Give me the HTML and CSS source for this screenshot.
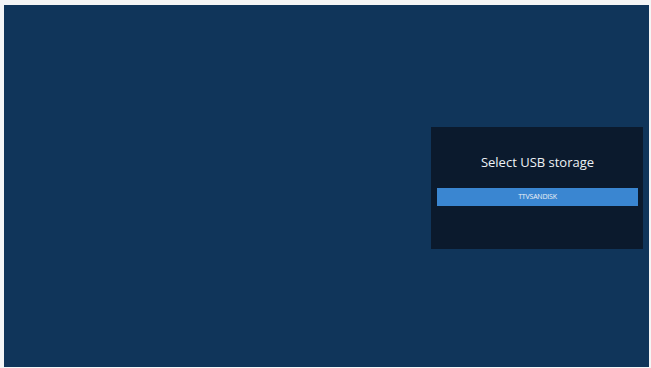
FILE: index.html
```html
<!doctype html>
<html lang="en">
  <head>
    <meta charset="UTF-8" />
    <meta name="viewport" content="width=device-width, initial-scale=1.0" />
    <title>Select USB storage</title>
    <link rel="stylesheet" href="styles.css">
  </head>
  <body>
    <div class="screen">
      <div class="dialog">
        <span class="dialog-title">Select USB storage</span>
        <div class="option selected">TTVSANDISK</div>
      </div>
    </div>
  </body>
</html>
```

FILE: styles.css
```css
* {
  margin: 0;
  padding: 0;
  box-sizing: border-box;
}
:root {
  --screen-background: #10355a;
  --dialog-background: #0b1a2d;
  --option-selected: #3a86d1;
  --text-color: #eef2f6;
}
html,
body {
  width: 100%;
  height: 100%;
}
body {
  background-color: #f4f5f6;
  font-family: "Open Sans", "Liberation Sans", sans-serif;
  color: var(--text-color);
  overflow: hidden;
  padding: 5px 2px 1px 4px;
}
.screen {
  width: 100%;
  height: 100%;
  background-color: var(--screen-background);
  display: flex;
  align-items: center;
  justify-content: flex-end;
  padding: 4px 6px 0 0;
}
.dialog {
  width: 212px;
  height: 122px;
  background-color: var(--dialog-background);
  display: flex;
  flex-direction: column;
  padding: 26px 5px 0 6px;
}
.dialog-title {
  display: block;
  text-align: center;
  font-size: 13px;
  line-height: 18px;
  height: 18px;
}
.option {
  margin-top: 17px;
  height: 18px;
  line-height: 18px;
  text-align: center;
  font-size: 7px;
  letter-spacing: -0.2px;
}
.option.selected {
  background-color: var(--option-selected);
}
```
